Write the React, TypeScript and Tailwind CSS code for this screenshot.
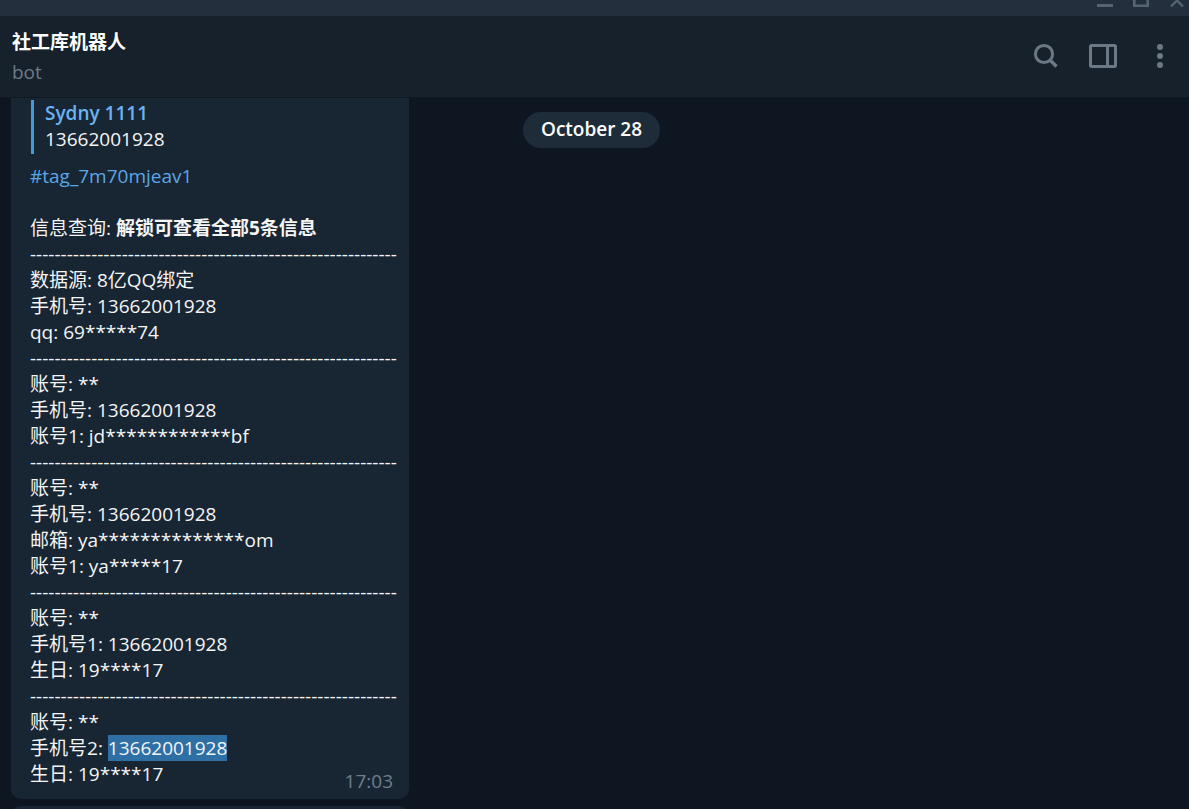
import { Fragment } from "react";

const SEPARATOR = "-".repeat(60);

type Field = { label: string; value: string; selected?: boolean };

const records: Field[][] = [
  [
    { label: "数据源", value: "8亿QQ绑定" },
    { label: "手机号", value: "13662001928" },
    { label: "qq", value: "69*****74" },
  ],
  [
    { label: "账号", value: "**" },
    { label: "手机号", value: "13662001928" },
    { label: "账号1", value: "jd************bf" },
  ],
  [
    { label: "账号", value: "**" },
    { label: "手机号", value: "13662001928" },
    { label: "邮箱", value: "ya**************om" },
    { label: "账号1", value: "ya*****17" },
  ],
  [
    { label: "账号", value: "**" },
    { label: "手机号1", value: "13662001928" },
    { label: "生日", value: "19****17" },
  ],
  [
    { label: "账号", value: "**" },
    { label: "手机号2", value: "13662001928", selected: true },
    { label: "生日", value: "19****17" },
  ],
];

function TitleBar() {
  return (
    <div className="flex h-4 shrink-0 items-end justify-end overflow-hidden bg-[#242f3d] text-[#566472]">
      <button aria-label="Minimize" className="h-4 w-9">
        <svg width="36" height="16" fill="none" stroke="currentColor" strokeWidth="3">
          <path d="M16 5.5h16" />
        </svg>
      </button>
      <button aria-label="Maximize" className="h-4 w-9">
        <svg width="36" height="16" fill="none" stroke="currentColor" strokeWidth="2.6">
          <path d="M17.3 -7.7h13.4v13.4h-13.4z" />
        </svg>
      </button>
      <button aria-label="Close" className="h-4 w-9">
        <svg width="36" height="16" fill="none" stroke="currentColor" strokeWidth="2.4">
          <path d="M18 6.5l12-12M30 6.5l-12-12" />
        </svg>
      </button>
    </div>
  );
}

function Header() {
  return (
    <header className="flex h-[82px] shrink-0 items-start justify-between border-b border-[#101921] bg-[#17212b] pl-3 pr-4">
      <div className="pt-3">
        <h1 className="font-bold leading-7 text-white">社工库机器人</h1>
        <p className="mt-1 leading-6 text-[#6c7b88]">bot</p>
      </div>
      <div className="flex items-center gap-7 pt-6 text-[#6c7883]">
        <button aria-label="Search">
          <svg width="30" height="32" fill="none" stroke="currentColor" strokeWidth="3">
            <circle cx="13" cy="14" r="8.6" />
            <path d="M19 20l6.5 6.5" strokeWidth="3.6" />
          </svg>
        </button>
        <button aria-label="Toggle side panel">
          <svg width="30" height="32" fill="none" stroke="currentColor" strokeWidth="3">
            <rect x="1.5" y="5.5" width="25" height="21" rx="1" />
            <path d="M18.5 5v22" />
          </svg>
        </button>
        <button aria-label="More options">
          <svg width="26" height="32" fill="currentColor">
            <circle cx="13" cy="7" r="3" />
            <circle cx="13" cy="16" r="3" />
            <circle cx="13" cy="25" r="3" />
          </svg>
        </button>
      </div>
    </header>
  );
}

function Message() {
  return (
    <article className="rounded-b-[10px] bg-[#182533] px-[19px] pb-3 pt-[2px] text-[#f5f5f5]">
      <blockquote className="ml-px border-l-[3px] border-[#429bdb] pb-[2px] pl-[11px]">
        <p className="font-semibold text-[#6ab3f3]">Sydny 1111</p>
        <p>13662001928</p>
      </blockquote>
      <a href="#tag_7m70mjeav1" className="mt-[9px] block text-[#5ba7e6]">
        #tag_7m70mjeav1
      </a>
      <p className="mt-[26px]">
        信息查询: <b>解锁可查看全部5条信息</b>
      </p>
      <div className="relative">
        {records.map((fields, i) => (
          <Fragment key={i}>
            <p className="whitespace-nowrap">{SEPARATOR}</p>
            {fields.map((field) => (
              <p key={field.label}>
                {field.label}:{" "}
                {field.selected ? (
                  <mark className="inline-block bg-[#2e70a5] text-[#f5f5f5]">{field.value}</mark>
                ) : (
                  field.value
                )}
              </p>
            ))}
          </Fragment>
        ))}
        <time className="absolute -bottom-[7px] -right-[3px] text-[#6d7f8f]">17:03</time>
      </div>
    </article>
  );
}

export default function App() {
  return (
    <div className="flex h-screen flex-col overflow-hidden bg-[#0e1621] font-['Open_Sans','Noto_Sans_CJK_SC',sans-serif] text-[19px] leading-[26px]">
      <TitleBar />
      <Header />
      <main className="relative min-h-0 flex-1 overflow-hidden pl-[11px]">
        <div className="flex w-[398px] flex-col gap-[7px]">
          <Message />
          <div className="h-20 rounded-[10px] bg-[#182533]" />
        </div>
        <div className="absolute inset-x-0 top-[14px] flex justify-center pr-[6px]">
          <time className="rounded-full bg-[#1e2c3a] px-[18px] pb-[6px] pt-1 font-semibold text-white">
            October 28
          </time>
        </div>
      </main>
    </div>
  );
}
